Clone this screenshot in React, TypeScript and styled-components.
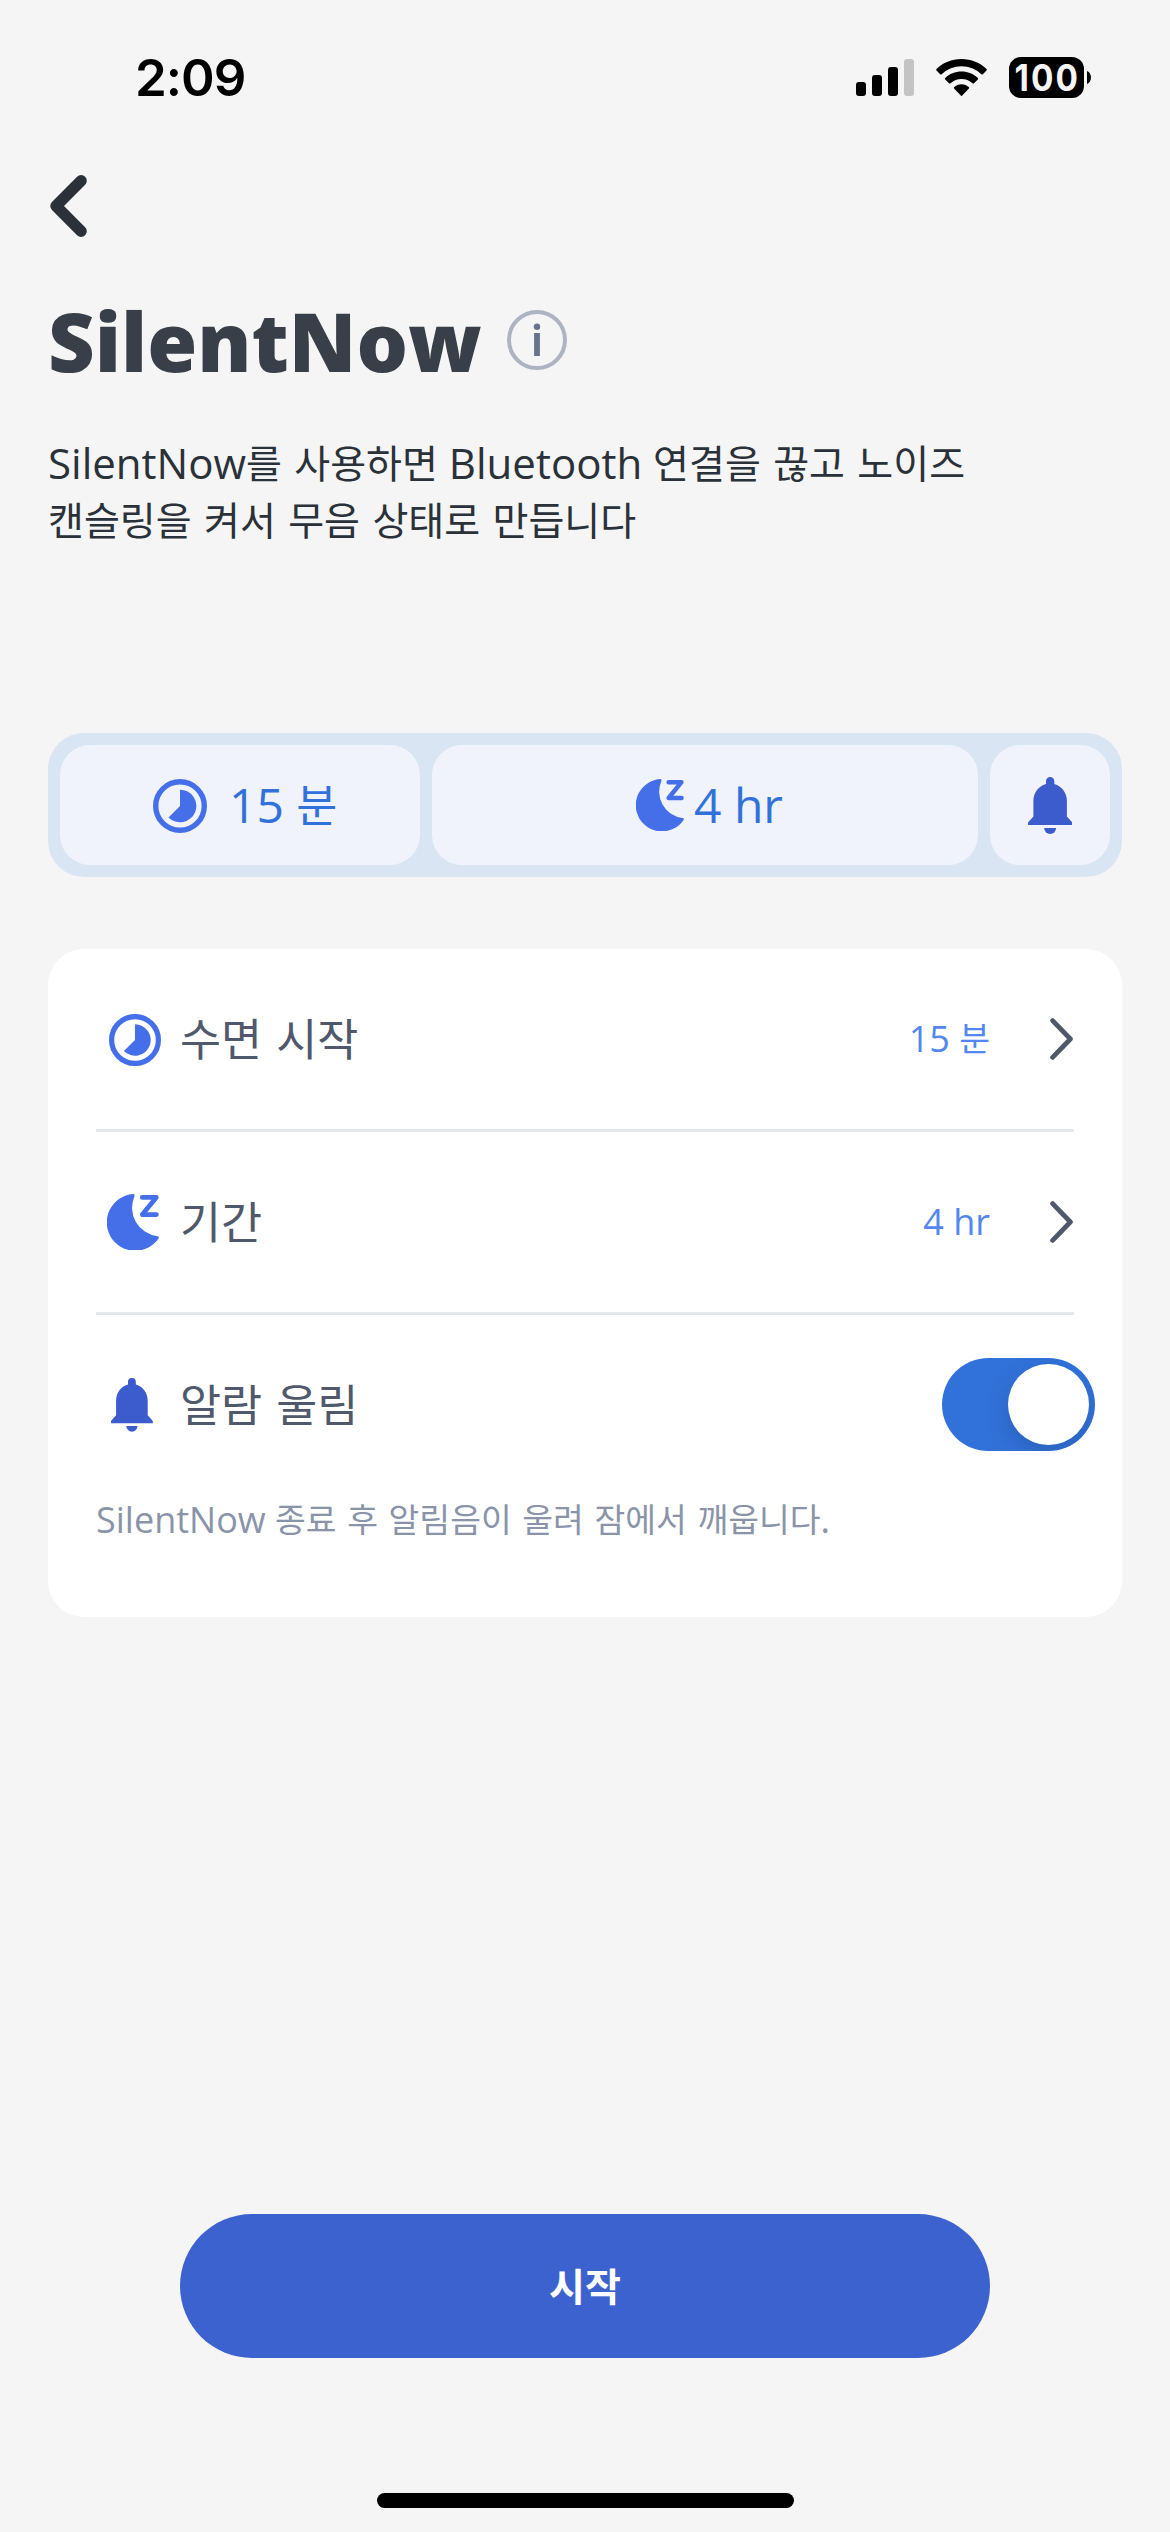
import React, { useState } from "react";
import styled, { createGlobalStyle } from "styled-components";

const colors = {
  page: "#f5f5f5",
  title: "#383f48",
  body: "#2b3138",
  label: "#4f596b",
  hint: "#8a94a9",
  accent: "#3172da",
  value: "#5287ef",
  icon: "#446fe9",
  bell: "#3c5bcc",
  button: "#3c62cf",
  divider: "#e4e8ed",
  track: "#d9e5f2",
  pill: "#f0f3fb",
};

const GlobalStyle = createGlobalStyle`
  * { box-sizing: border-box; }
  body {
    margin: 0;
    background: ${colors.page};
    font-family: "Open Sans", "Noto Sans CJK KR", sans-serif;
  }
  svg { display: block; flex: none; }
`;

const Screen = styled.main`
  display: flex;
  flex-direction: column;
  width: 1170px;
  height: 2532px;
  background: ${colors.page};
`;

/* Hangul is set slightly smaller than the Latin text beside it. */
const Hangul = styled.span`
  font-size: 0.93em;
  line-height: 1;
  vertical-align: 0.02em;
  word-spacing: 0.056em;
`;

function Mixed({ children }: { children: string }) {
  const parts = children.split(/([가-힣]+(?: [가-힣]+)*)/);
  return (
    <>
      {parts.map((part, i) => (i % 2 ? <Hangul key={i}>{part}</Hangul> : part))}
    </>
  );
}

/* ---------- status bar ---------- */

const StatusBar = styled.header`
  display: flex;
  align-items: center;
  justify-content: space-between;
  height: 155px;
  padding: 0 79px 0 135px;
  color: #000;
`;

const Time = styled.span`
  font: 600 51px/62px Inter, sans-serif;
  letter-spacing: -1px;
`;

const StatusIcons = styled.div`
  display: flex;
  align-items: center;
`;

const Battery = styled.div`
  display: flex;
  align-items: center;
  gap: 3px;
  margin-left: 22px;
`;

const BatteryBody = styled.div`
  display: flex;
  align-items: center;
  justify-content: center;
  width: 75px;
  height: 41px;
  border-radius: 12px;
  background: #000;
  color: ${colors.page};
`;

const BatteryLevel = styled.span`
  margin-right: -2px;
  font: 700 37px/41px Inter, sans-serif;
  letter-spacing: 2.2px;
  transform: scaleX(0.9);
`;

const SignalIcon = styled.svg`
  margin-right: 22px;
`;

/* ---------- heading ---------- */

const BackButton = styled.button`
  display: flex;
  align-self: flex-start;
  margin: 20px 0 0 50px;
  padding: 0;
  border: 0;
  background: none;
`;

const TitleRow = styled.div`
  display: flex;
  align-items: center;
  gap: 25px;
  height: 110px;
  margin: 48px 0 0 48px;
`;

const Title = styled.h1`
  margin: 2px 0 0;
  color: ${colors.title};
  font-size: 81px;
  font-weight: 800;
  line-height: 110px;
`;

const Description = styled.p`
  margin: 39px 48px 0;
  height: 114px;
  color: ${colors.body};
  font-size: 42px;
  line-height: 57px;
`;

/* ---------- summary pills ---------- */

const Summary = styled.section`
  display: grid;
  grid-template-columns: 360px 546px 120px;
  gap: 12px;
  height: 144px;
  margin: 185px 48px 0;
  padding: 12px;
  border-radius: 36px;
  background: ${colors.track};
`;

const Pill = styled.div<{ $inset?: number; $gap?: number }>`
  display: flex;
  align-items: center;
  justify-content: ${(p) => (p.$inset ? "flex-start" : "center")};
  gap: ${(p) => p.$gap ?? 0}px;
  padding-left: ${(p) => p.$inset ?? 0}px;
  border-radius: 30px;
  background: ${colors.pill};
`;

const PillText = styled.span`
  padding-bottom: 1px;
  color: ${colors.accent};
  font-size: 48px;
  line-height: 65px;
`;

/* ---------- settings card ---------- */

const Card = styled.section`
  height: 668px;
  margin: 72px 48px 0;
  padding: 0 48px;
  border-radius: 36px;
  background: #fff;
`;

const Row = styled.div<{ $divided?: boolean }>`
  display: flex;
  align-items: center;
  height: ${(p) => (p.$divided ? 183 : 180)}px;
  border-bottom: ${(p) => (p.$divided ? `3px solid ${colors.divider}` : "0")};
`;

const IconSlot = styled.div<{ $inset: number }>`
  width: 84px;
  padding-left: ${(p) => p.$inset}px;
`;

const Label = styled.span`
  flex: 1;
  padding-bottom: 2px;
  color: ${colors.label};
  font-size: 48px;
  line-height: 65px;
`;

const Value = styled.span`
  margin-right: 60px;
  padding-bottom: 2px;
  color: ${colors.value};
  font-size: 36px;
  line-height: 49px;
`;

const Toggle = styled.button<{ $on: boolean }>`
  display: flex;
  align-items: center;
  justify-content: ${(p) => (p.$on ? "flex-end" : "flex-start")};
  width: 153px;
  height: 93px;
  margin: 0 -21px 1px 0;
  padding: 0 6px;
  border: 0;
  border-radius: 47px;
  background: ${(p) => (p.$on ? colors.accent : "#c9ced6")};
  overflow: hidden;
`;

const Knob = styled.span`
  width: 81px;
  height: 81px;
  border-radius: 50%;
  background: #fff;
  box-shadow: 0 9px 24px rgba(0, 0, 0, 0.15);
`;

const Hint = styled.p`
  margin: 0;
  color: ${colors.hint};
  font-size: 36px;
  line-height: 49px;
`;

/* ---------- footer ---------- */

const StartButton = styled.button`
  align-self: center;
  width: 810px;
  height: 144px;
  margin-top: auto;
  padding: 0 0 2px;
  border: 0;
  border-radius: 72px;
  background: ${colors.button};
  color: #fff;
  font-family: inherit;
  font-size: 42px;
  font-weight: 700;
  line-height: 57px;
`;

const HomeIndicator = styled.div`
  align-self: center;
  width: 417px;
  height: 15px;
  margin: 135px 0 24px;
  border-radius: 8px;
  background: #000;
`;

/* ---------- icons ---------- */

const ClockSvg = styled.svg`
  margin-top: 2px;
`;

const ClockIcon = ({ size }: { size: number }) => (
  <ClockSvg width={size} height={size} viewBox="0 0 54 54">
    <circle cx="27" cy="27" r="24.3" fill="none" stroke={colors.icon} strokeWidth="5.4" />
    <path d="M27 27V10.7A16.3 16.3 0 1 1 15.5 38.5Z" fill={colors.icon} />
  </ClockSvg>
);

const MoonIcon = ({ width }: { width: number }) => (
  <svg width={width} height={(width * 52.5) / 48} viewBox="0 0 48 52.5">
    <path
      d="M23.8.1A26.2 26.2 0 1 0 47.6 41Q48.4 39 46.5 38.9A26.4 26.4 0 0 1 25.4 2Q25.8 0 23.8.1Z"
      fill={colors.icon}
    />
    <path
      d="M32.6 3.2H45.5L32.6 19H45.6"
      fill="none"
      stroke={colors.icon}
      strokeWidth="4.4"
      strokeLinecap="round"
      strokeLinejoin="round"
    />
  </svg>
);

const BellIcon = ({ width }: { width: number }) => (
  <svg width={width} height={(width * 57) / 44.3} viewBox="0 0 44.3 57">
    <path
      d="M22.15 0A4.1 4.1 0 0 1 26.3 4.1V7C34 9.3 38.9 16 38.9 24V39.5L43.9 45Q44.3 45.5 44.3 46V48H0V46Q0 45.5.4 45L5.4 39.5V24C5.4 16 10.3 9.3 18 7V4.1A4.1 4.1 0 0 1 22.15 0Z"
      fill={colors.bell}
    />
    <path d="M16.2 51H28.1A5.95 6 0 0 1 16.2 51Z" fill={colors.bell} />
  </svg>
);

const Chevron = () => (
  <svg width="24" height="42" viewBox="0 0 24 42">
    <path
      d="M2.6 2.6L20.4 21L2.6 39.4"
      fill="none"
      stroke={colors.label}
      strokeWidth="4.8"
      strokeLinecap="round"
      strokeLinejoin="round"
    />
  </svg>
);

const BackIcon = () => (
  <svg width="38" height="62" viewBox="0 0 38 62">
    <path
      d="M31.1 5.8L6 31L31.1 56.2"
      fill="none"
      stroke={colors.body}
      strokeWidth="11.4"
      strokeLinecap="round"
      strokeLinejoin="round"
    />
  </svg>
);

const InfoIcon = () => (
  <svg width="60" height="60" viewBox="0 0 60 60">
    <circle cx="30" cy="30" r="28" fill="none" stroke="#adb3c0" strokeWidth="4" />
    <circle cx="30" cy="16.7" r="3.2" fill="#67738c" />
    <rect x="27.1" y="23" width="5.8" height="23" fill="#67738c" />
  </svg>
);

const Signal = () => (
  <SignalIcon width="58" height="38" viewBox="0 0 58 38">
    <rect x="0" y="23" width="10" height="14" rx="3" />
    <rect x="16" y="16" width="10" height="21" rx="3" />
    <rect x="32" y="8" width="10" height="29" rx="3" />
    <rect x="48" y="0" width="10" height="37" rx="3" fill="#c4c4c4" />
  </SignalIcon>
);

const Wifi = () => (
  <svg width="51" height="38" viewBox="0 0 51 38">
    <path d="M25.5 0C35.3 0 44.2 3.8 50.5 9.9Q51.2 10.7 50.5 11.4L46.8 15.2Q46.1 15.9 45.3 15.2A28.6 28.6 0 0 0 5.7 15.2Q4.9 15.9 4.2 15.2L.5 11.4Q-.2 10.7.5 9.9C6.8 3.8 15.7 0 25.5 0Z" />
    <path d="M25.5 12.6C31.8 12.6 37.5 15 41.8 19Q42.5 19.7 41.8 20.4L38 24.2Q37.3 24.9 36.5 24.2A16.2 16.2 0 0 0 14.5 24.2Q13.7 24.9 13 24.2L9.2 20.4Q8.5 19.7 9.2 19C13.5 15 19.2 12.6 25.5 12.6Z" />
    <path d="M25.5 25.3C28.3 25.3 30.9 26.4 32.8 28.1Q33.6 28.8 32.9 29.5L26.2 36.6Q25.5 37.3 24.8 36.6L18.1 29.5Q17.4 28.8 18.2 28.1C20.1 26.4 22.7 25.3 25.5 25.3Z" />
  </svg>
);

export default function App() {
  const [alarm, setAlarm] = useState(true);

  return (
    <Screen>
      <GlobalStyle />
      <StatusBar>
        <Time>2:09</Time>
        <StatusIcons>
          <Signal />
          <Wifi />
          <Battery>
            <BatteryBody>
              <BatteryLevel>100</BatteryLevel>
            </BatteryBody>
            <svg width="4" height="13" viewBox="0 0 4 13">
              <path d="M0 0C2.6 1 4 3.6 4 6.5S2.6 12 0 13Z" />
            </svg>
          </Battery>
        </StatusIcons>
      </StatusBar>

      <BackButton aria-label="뒤로">
        <BackIcon />
      </BackButton>

      <TitleRow>
        <Title>SilentNow</Title>
        <InfoIcon />
      </TitleRow>
      <Description>
        <Mixed>SilentNow를 사용하면 Bluetooth 연결을 끊고 노이즈</Mixed>
        <br />
        <Mixed>캔슬링을 켜서 무음 상태로 만듭니다</Mixed>
      </Description>

      <Summary>
        <Pill $inset={93} $gap={22}>
          <ClockIcon size={54} />
          <PillText>
            <Mixed>15 분</Mixed>
          </PillText>
        </Pill>
        <Pill $inset={204} $gap={10}>
          <MoonIcon width={48} />
          <PillText>4 hr</PillText>
        </Pill>
        <Pill>
          <BellIcon width={44.3} />
        </Pill>
      </Summary>

      <Card>
        <Row $divided>
          <IconSlot $inset={12.5}>
            <ClockIcon size={52} />
          </IconSlot>
          <Label>
            <Mixed>수면 시작</Mixed>
          </Label>
          <Value>
            <Mixed>15 분</Mixed>
          </Value>
          <Chevron />
        </Row>
        <Row $divided>
          <IconSlot $inset={10.7}>
            <MoonIcon width={52} />
          </IconSlot>
          <Label>
            <Mixed>기간</Mixed>
          </Label>
          <Value>4 hr</Value>
          <Chevron />
        </Row>
        <Row>
          <IconSlot $inset={15}>
            <BellIcon width={41.8} />
          </IconSlot>
          <Label>
            <Mixed>알람 울림</Mixed>
          </Label>
          <Toggle $on={alarm} aria-pressed={alarm} onClick={() => setAlarm(!alarm)}>
            <Knob />
          </Toggle>
        </Row>
        <Hint>
          <Mixed>SilentNow 종료 후 알림음이 울려 잠에서 깨웁니다.</Mixed>
        </Hint>
      </Card>

      <StartButton>
        <Mixed>시작</Mixed>
      </StartButton>
      <HomeIndicator />
    </Screen>
  );
}
